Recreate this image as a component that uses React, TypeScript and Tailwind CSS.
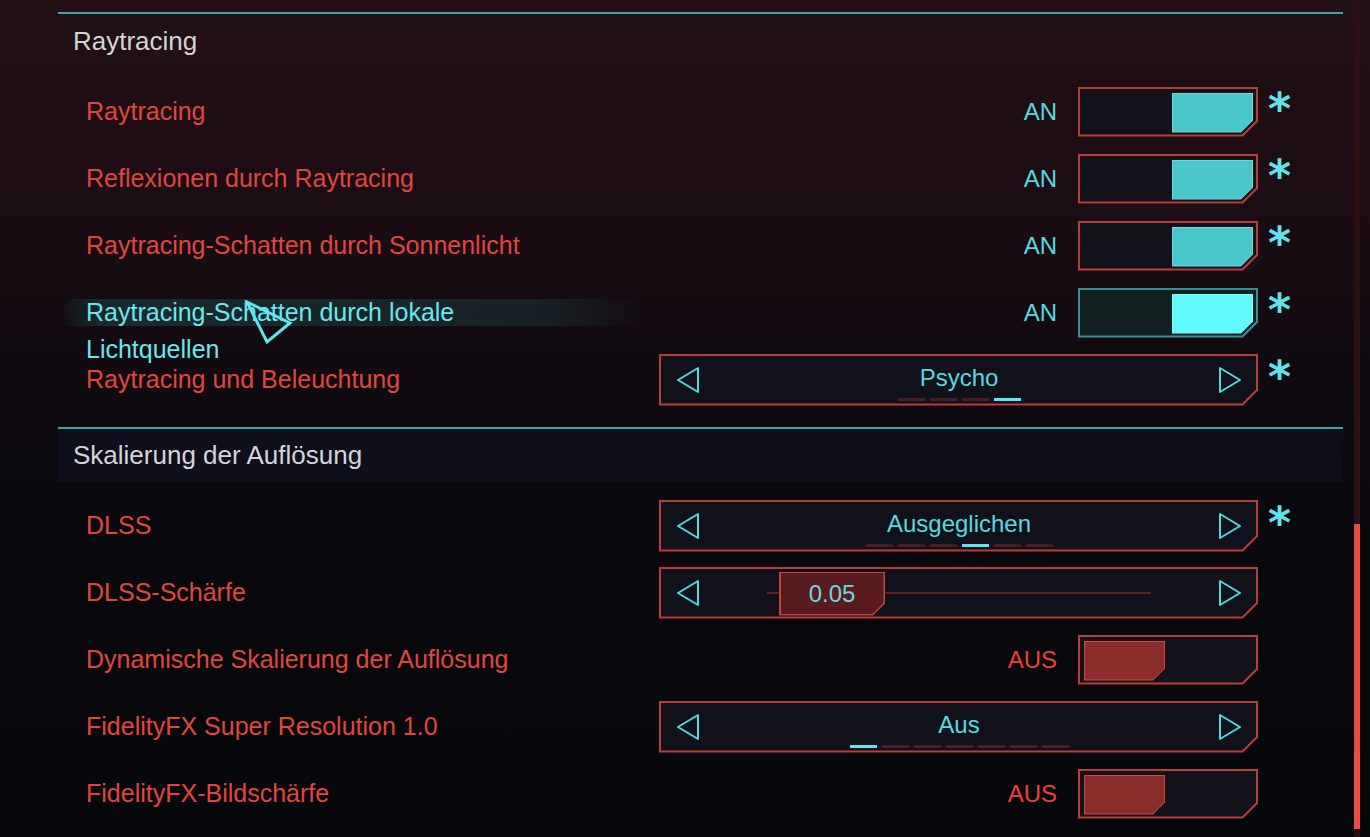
import React from 'react';

const FONT = "font-['Liberation_Sans',Arial,sans-serif]";

// cut-corner shapes (bottom-right)
const CUT_BOX = '[clip-path:polygon(0_0,100%_0,100%_calc(100%_-_15px),calc(100%_-_15px)_100%,0_100%)]';
const CUT_BOX_IN = '[clip-path:polygon(0_0,100%_0,100%_calc(100%_-_14px),calc(100%_-_14px)_100%,0_100%)]';
const CUT_BLOCK = '[clip-path:polygon(0_0,100%_0,100%_calc(100%_-_12px),calc(100%_-_12px)_100%,0_100%)]';
const CUT_BLOCK_IN = '[clip-path:polygon(0_0,100%_0,100%_calc(100%_-_11px),calc(100%_-_11px)_100%,0_100%)]';

function ArrowLeft() {
  return (
    <svg width="26" height="30" viewBox="0 0 26 30">
      <path d="M23 3 L23 27 L3 15 Z" fill="none" stroke="#55d6de" strokeWidth="2" strokeLinejoin="round" />
    </svg>
  );
}

function ArrowRight() {
  return (
    <svg width="26" height="30" viewBox="0 0 26 30">
      <path d="M3 3 L3 27 L23 15 Z" fill="none" stroke="#55d6de" strokeWidth="2" strokeLinejoin="round" />
    </svg>
  );
}

function Toggle({ on, active }: { on: boolean; active?: boolean }) {
  return (
    <div className="flex items-center gap-[21px]">
      <span className={`text-[24px] ${on ? 'text-[#5ad8e0]' : 'text-[#ee4038]'}`}>{on ? 'AN' : 'AUS'}</span>
      <div className={`w-[180px] h-[50px] p-[2px] ${active ? 'bg-[#3d8c92]' : 'bg-[#b83c38]'} ${CUT_BOX}`}>
        <div
          className={`h-full w-full flex pt-[4px] pb-[2px] ${on ? 'justify-end pr-[3px]' : 'justify-start pl-[4px]'} ${
            active ? 'bg-[#112021]' : 'bg-[#13121b]'
          } ${CUT_BOX_IN}`}
        >
          <div
            className={`w-[81px] h-full p-[1px] ${
              on ? (active ? 'bg-[#7ffcff]' : 'bg-[#6ad8dc]') : 'bg-[#c84a42]'
            } ${CUT_BLOCK}`}
          >
            <div
              className={`h-full w-full ${on ? (active ? 'bg-[#5ff8fc]' : 'bg-[#4bc6cb]') : 'bg-[#8b2e2b]'} ${CUT_BLOCK_IN}`}
            />
          </div>
        </div>
      </div>
    </div>
  );
}

function Dashes({ count, active }: { count: number; active: number }) {
  return (
    <div className="flex gap-[5px] mt-[7px]">
      {Array.from({ length: count }).map((_, i) => (
        <div key={i} className={`w-[27px] h-[3px] ${i === active ? 'bg-[#5ee6ee]' : 'bg-[#4a1c22]'}`} />
      ))}
    </div>
  );
}

function SelectorBox({ children }: { children: React.ReactNode }) {
  return (
    <div className={`w-[599px] h-[52px] p-[2px] bg-[#b83c38] ${CUT_BOX}`}>
      <div className={`h-full w-full bg-[#11111b] flex items-center pl-[14px] pr-[13px] ${CUT_BOX_IN}`}>
        <ArrowLeft />
        <div className="flex-1 h-full">{children}</div>
        <ArrowRight />
      </div>
    </div>
  );
}

function Selector({ value, count, active }: { value: string; count: number; active: number }) {
  return (
    <SelectorBox>
      <div className="h-full flex flex-col items-center justify-center pt-[6px]">
        <span className="text-[24px] leading-[26px] text-[#5ad8e0]">{value}</span>
        <Dashes count={count} active={active} />
      </div>
    </SelectorBox>
  );
}

function Slider({ value }: { value: string }) {
  return (
    <SelectorBox>
      <div className="h-full flex items-center px-[66px]">
        <div className="relative flex-1 h-[2px] bg-[#5e1f24]">
          <div className={`absolute left-[12px] -top-[20px] w-[106px] h-[44px] p-[1.5px] bg-[#c4433d] ${CUT_BLOCK}`}>
            <div className={`h-full w-full bg-[#5a1b1f] flex items-center justify-center ${CUT_BLOCK_IN}`}>
              <span className="text-[24px] text-[#6ad8e0]">{value}</span>
            </div>
          </div>
        </div>
      </div>
    </SelectorBox>
  );
}

function Row({
  label,
  children,
  star,
  highlight,
  second,
}: {
  label: string;
  children: React.ReactNode;
  star?: boolean;
  highlight?: boolean;
  second?: string;
}) {
  return (
    <div className="h-[67px] flex items-center pl-[28px]">
      <div className="flex-1 flex items-center">
        {highlight ? (
          <div className="relative -ml-[21px] pl-[21px] w-[580px] h-[27px] flex items-center bg-[linear-gradient(90deg,rgba(28,62,64,0.1),rgba(28,62,64,0.6)_6%,rgba(28,62,64,0.45)_80%,rgba(28,62,64,0))]">
            <span className="text-[25px] text-[#6be6ee] leading-none">{label}</span>
            {second && (
              <span className="absolute left-[21px] top-[38px] text-[25px] text-[#6be6ee] leading-none">{second}</span>
            )}
          </div>
        ) : (
          <span className="text-[25px] text-[#e0463e] leading-none">{label}</span>
        )}
      </div>
      <div className="w-[600px] flex justify-end">{children}</div>
      <div className="w-[85px] self-stretch pl-[10px] pt-[9px]">
        {star && (
          <span className="font-['DejaVu_Sans',sans-serif] font-bold text-[44px] leading-none text-[#5ee4ec]">*</span>
        )}
      </div>
    </div>
  );
}

export default function App() {
  return (
    <div
      className={`w-[1370px] h-[837px] overflow-hidden flex ${FONT} bg-[linear-gradient(180deg,#221016_0%,#1a0d13_25%,#0e0a10_50%,#08080d_70%,#07080c_100%)]`}
    >
      <div className="relative ml-[58px] w-[1285px] pt-[12px]">
        {/* Raytracing */}
        <div className="border-t-2 border-[#3aa3ab]">
          <div className="h-[54px] flex items-center pl-[15px]">
            <span className="text-[26px] text-[#d4d3d8]">Raytracing</span>
          </div>
          <div className="pt-[10px]">
            <Row label="Raytracing" star>
              <Toggle on />
            </Row>
            <Row label="Reflexionen durch Raytracing" star>
              <Toggle on />
            </Row>
            <Row label="Raytracing-Schatten durch Sonnenlicht" star>
              <Toggle on />
            </Row>
            <Row label="Raytracing-Schatten durch lokale" second="Lichtquellen" highlight star>
              <Toggle on active />
            </Row>
            <Row label="Raytracing und Beleuchtung" star>
              <Selector value="Psycho" count={4} active={3} />
            </Row>
          </div>
        </div>

        {/* Skalierung der Auflösung */}
        <div className="mt-[14px] border-t-2 border-[#3aa3ab]">
          <div className="h-[53px] flex items-center pl-[15px] bg-[#0f0f1c]">
            <span className="text-[26px] text-[#d4d3d8]">Skalierung der Auflösung</span>
          </div>
          <div className="pt-[10px]">
            <Row label="DLSS" star>
              <Selector value="Ausgeglichen" count={6} active={3} />
            </Row>
            <Row label="DLSS-Schärfe">
              <Slider value="0.05" />
            </Row>
            <Row label="Dynamische Skalierung der Auflösung">
              <Toggle on={false} />
            </Row>
            <Row label="FidelityFX Super Resolution 1.0">
              <Selector value="Aus" count={7} active={0} />
            </Row>
            <Row label="FidelityFX-Bildschärfe">
              <Toggle on={false} />
            </Row>
          </div>
        </div>

        {/* mouse cursor */}
        <svg className="absolute left-[185px] top-[300px]" width="50" height="50" viewBox="0 0 50 50">
          <path d="M4 2 L47 23 L24 42 Z" fill="none" stroke="#5ee6ee" strokeWidth="3" strokeLinejoin="miter" />
        </svg>
      </div>

      {/* scrollbar */}
      <div className="ml-[11px] w-[6px] h-full flex flex-col bg-[#2a0f14]">
        <div className="h-[524px]" />
        <div className="h-[305px] bg-[#e84c42]" />
      </div>
    </div>
  );
}
